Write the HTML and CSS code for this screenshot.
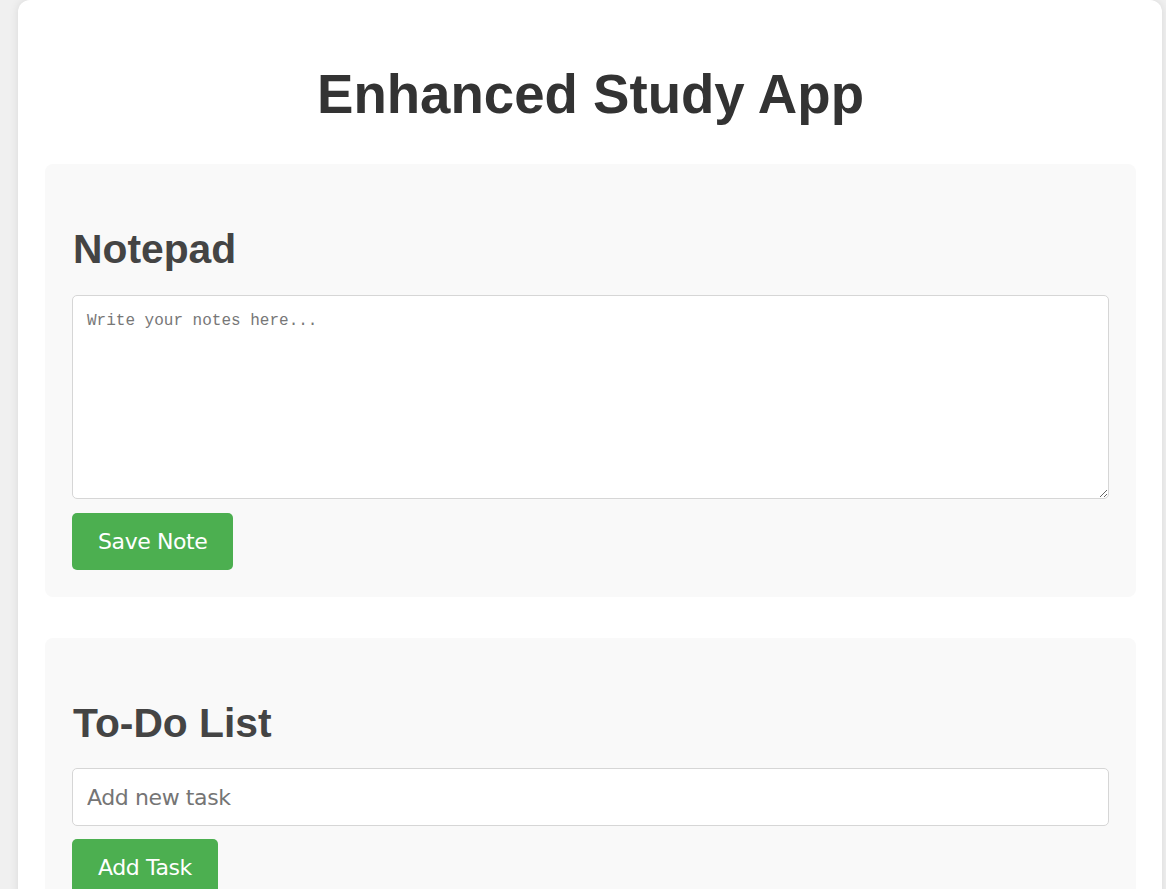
FILE: index.html
```html
<!DOCTYPE html>
<html lang="en">
<head>
<meta charset="utf-8">
<title>Enhanced Study App</title>
<link rel="stylesheet" href="styles.css">
</head>
<body>
<div class="app">
  <h1 class="app-title">Enhanced Study App</h1>
  <section class="panel">
    <h2 class="panel-title">Notepad</h2>
    <textarea class="note-area" placeholder="Write your notes here..."></textarea>
    <button class="btn">Save Note</button>
  </section>
  <section class="panel">
    <h2 class="panel-title">To-Do List</h2>
    <input class="task-input" type="text" placeholder="Add new task">
    <button class="btn">Add Task</button>
  </section>
</div>
</body>
</html>
```
FILE: styles.css
```css
html, body {
  margin: 0;
  height: 889px;
  overflow: hidden;
}
body {
  background: #f0f0f0;
  padding: 0 4px 0 18px;
  font-family: "Liberation Sans", Arial, sans-serif;
}
.app {
  background: #ffffff;
  border-radius: 12px;
  box-shadow: 0 0 10px rgba(0, 0, 0, 0.1);
  padding: 28px 26px 40px 27px;
}
.app-title {
  margin: 36px 0 38px;
  font-size: 54.6px;
  line-height: 62px;
  font-weight: bold;
  text-align: center;
  color: #333333;
}
.panel {
  background: #f9f9f9;
  border-radius: 8px;
  padding: 27px;
  margin-bottom: 41px;
}
.panel-title {
  margin: 35px 0 23px 1px;
  font-size: 40.8px;
  line-height: 46px;
  font-weight: bold;
  color: #444444;
}
.note-area {
  display: block;
  box-sizing: border-box;
  width: 100%;
  height: 204px;
  margin: 0 0 14px;
  padding: 15px 14px 14px;
  border: 1px solid #d6d6d6;
  border-radius: 5px;
  background: #ffffff;
  font-family: "Liberation Mono", "DejaVu Sans Mono", monospace;
  font-size: 16px;
  line-height: 20px;
}
.note-area::placeholder {
  color: #777777;
}
.task-input {
  display: block;
  box-sizing: border-box;
  width: 100%;
  height: 58px;
  margin: -1px 0 13px;
  padding: 0 14px;
  border: 1px solid #d6d6d6;
  border-radius: 5px;
  background: #ffffff;
  font-family: Tahoma, "DejaVu Sans", sans-serif;
  font-size: 22px;
  letter-spacing: -0.4px;
}
.task-input::placeholder {
  color: #757575;
}
.btn {
  display: block;
  height: 57px;
  padding: 0 26px;
  border: none;
  border-radius: 5px;
  background: #4caf50;
  color: #ffffff;
  font-family: Tahoma, "DejaVu Sans", sans-serif;
  font-size: 22px;
  letter-spacing: -0.4px;
  cursor: pointer;
}
```
